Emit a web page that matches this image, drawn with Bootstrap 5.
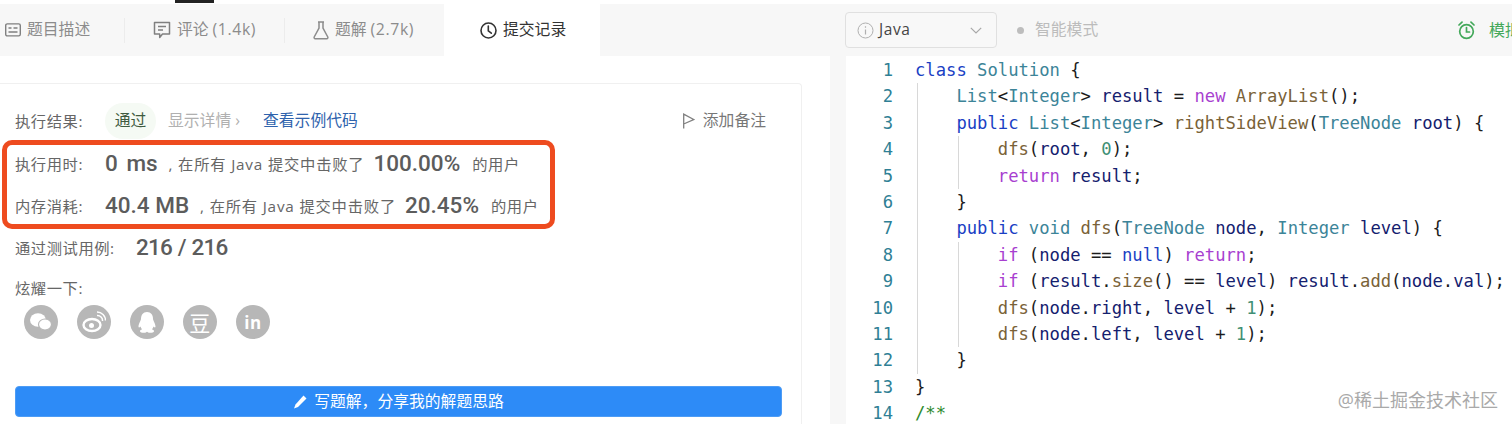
<!DOCTYPE html>
<html lang="zh-CN">
<head>
<meta charset="utf-8">
<title>提交记录</title>
<link rel="stylesheet" href="https://cdn.jsdelivr.net/npm/bootstrap@5.3.0/dist/css/bootstrap.min.css">
<style>
:root{--cjk:"Noto Sans CJK SC";}
html,body{height:424px;overflow:hidden;background:#f7f7f7;}
body{font-family:"Open Sans",var(--cjk),sans-serif;position:relative;}
.top-strip{height:4px;background:#fff;position:relative;padding-left:175px;}
.top-mark{display:block;width:39px;height:3px;background:#222;}
.work{height:420px;}
.left-col{width:846px;flex:none;}
.right-col{flex:1;min-width:0;}
.tab-bar{height:52px;background:#f7f7f7;}
.tab-cell{height:52px;font-size:15.8px;color:#8c8c8c;white-space:nowrap;}
.tab-a{width:125px;padding-left:5px;}
.tab-b{width:160px;padding-left:28px;}
.tab-c{width:159px;padding-left:28px;}
.tab-d{width:156px;padding-left:36px;background:#fff;color:#333;}
.tab-cell svg{margin-right:6px;flex:none;}
.tab-count{letter-spacing:.6px;margin-left:4px;}
.tab-sep{position:relative;}
.tab-sep::after{content:"";position:absolute;right:0;top:14px;height:25px;border-right:1px solid #ececec;}
.pane{width:830px;height:368px;background:#fff;padding-top:27px;}
.res-box{width:802px;height:341px;border-top:1px solid #f0f0f0;border-right:1px solid #f0f0f0;border-top-right-radius:4px;padding-top:19px;color:#666;font-size:15.3px;letter-spacing:.55px;}
.res-line{height:36px;padding-left:15px;white-space:nowrap;}
.lbl{width:90px;flex:none;color:#666;}
.pill{width:51px;height:36px;border-radius:18px;background:#f5faf4;color:#3f5a3f;font-size:15.8px;margin-right:12px;letter-spacing:0;}
.detail{color:#b0b0b0;font-size:15.8px;width:95px;flex:none;letter-spacing:0;}
.sample{color:#2f63ad;font-size:15.8px;text-decoration:none;letter-spacing:0;}
.remark{margin-left:auto;margin-right:35px;color:#777;font-size:15.8px;letter-spacing:0;}
.alert-wrap{width:553px;height:89px;margin:1px 0 0 2px;border:5px solid #ee4b1f;border-radius:10px;}
.stat-line{height:38px;padding-left:8px;white-space:nowrap;}
.stat-line + .stat-line{margin-top:4px;}
.sentence{letter-spacing:.8px;margin-left:11px;}
.big{font-family:"Roboto",sans-serif;font-weight:500;font-size:22.5px;color:#5c5c5c;letter-spacing:0;}
.big-gap{margin-left:9px;}
.big-unit{word-spacing:3px;}
.big-tight{word-spacing:1px;letter-spacing:-.8px;}
.tail{margin-left:12px;}
.test-line{height:38px;padding-left:15px;}
.test-line .lbl{width:121px;}
.share-title{padding-left:15px;margin-top:10px;height:22px;line-height:22px;}
.share-row{padding-left:24px;margin-top:6px;gap:19px;}
.soc{width:34px;height:34px;border-radius:50%;background:#b7b7b7;color:#fff;flex:none;}
.soc-txt{font-family:"Noto Sans CJK SC",sans-serif;font-size:21px;line-height:1;font-weight:400;}
.soc-in{font-family:"Open Sans",sans-serif;font-weight:700;font-size:17px;line-height:1;}
.write-btn{width:767px;height:31px;margin:47px 0 0 15px;background:#2d8bf7;border:1px solid #4d9cf5;border-radius:4px;color:#fff;font-size:15.8px;padding:0;letter-spacing:0;}
.write-btn svg{margin-right:6px;}
.tool-bar{height:52px;background:#f7f7f7;padding-top:8px;}
.lang{width:152px;height:36px;background:#f8f8f8;border:1px solid #e0e0e0;border-radius:4px;padding:0 14px 0 11px;color:#444;font-size:15.5px;letter-spacing:.6px;margin-left:-1px;}
.lang svg:first-child{margin-right:5px;}
.smart{color:#bcbcbc;font-size:15.8px;margin-left:20px;}
.smart-dot{width:7px;height:7px;border-radius:50%;background:#bdbdbd;margin-right:11px;}
.mock{color:#43a85a;font-size:16px;margin-left:auto;white-space:nowrap;width:54px;overflow:hidden;}
.mock svg{margin-right:14px;flex:none;}
.editor{height:368px;background:#fff;overflow:hidden;padding-top:1px;font-family:"DejaVu Sans Mono",monospace;font-size:17.2px;line-height:26.4px;white-space:pre;color:#1c1c1c;}
.nums{width:47px;flex:none;text-align:right;color:#2f7f95;}
.code{margin-left:22px;}
.ind{margin-left:2px;border-left:1px solid #d8d8d8;padding-left:38.4px;}
.k{color:#1a3fc4}.t{color:#3c8498}.v{color:#14206e}.p{color:#a83fd0}.f{color:#7a6238}.n{color:#3f8f74}.c{color:#2e8b2e}
.wm{position:absolute;right:14px;bottom:15px;color:#a9a9a9;font-size:18px;line-height:1;white-space:nowrap;}
</style>
</head>
<body>
<div class="top-strip"><span class="top-mark"></span></div>
<div class="work d-flex">
  <div class="left-col">
    <div class="tab-bar d-flex">
      <div class="tab-cell tab-a tab-sep d-flex align-items-center">
        <svg width="16" height="14" viewBox="0 0 16 14" fill="none" stroke="#808080" stroke-width="1.4"><rect x=".7" y=".9" width="14.6" height="12" rx="1.6"/><path d="M3.5 5h3M8.5 5h4M3.5 9h9"/></svg>题目描述
      </div>
      <div class="tab-cell tab-b tab-sep d-flex align-items-center">
        <svg width="18" height="19" viewBox="0 0 18 19" fill="none" stroke="#808080" stroke-width="1.5"><path d="M1.5 1.5h15v11.5h-7l-2.8 3.4v-3.4h-5.2z" stroke-linejoin="round"/><path d="M5 5.5h8M5 9h5"/></svg>评论<span class="tab-count">(1.4k)</span>
      </div>
      <div class="tab-cell tab-c d-flex align-items-center">
        <svg width="16" height="19" viewBox="0 0 16 19" fill="none" stroke="#8c8c8c" stroke-width="1.5" stroke-linejoin="round"><path d="M5 1h6M6 1v6.2L1.2 16a1.2 1.2 0 0 0 1 1.7h11.6a1.2 1.2 0 0 0 1-1.7L10 7.200V1"/></svg>题解<span class="tab-count">(2.7k)</span>
      </div>
      <div class="tab-cell tab-d d-flex align-items-center">
        <svg width="17" height="17" viewBox="0 0 17 17" fill="none" stroke="#333" stroke-width="1.6"><circle cx="8.500" cy="8.500" r="7.500"/><path d="M8.300 4v4.800l3 2.400" stroke-linecap="round"/></svg>提交记录
      </div>
    </div>
    <div class="d-flex">
      <div class="pane">
        <div class="res-box">
          <div class="res-line d-flex align-items-center">
            <span class="lbl">执行结果:</span>
            <span class="pill d-flex align-items-center justify-content-center">通过</span>
            <span class="detail">显示详情 ›</span>
            <a class="sample" href="#">查看示例代码</a>
            <span class="remark d-flex align-items-center gap-2">
              <svg width="13" height="16" viewBox="0 0 13 16" fill="none" stroke="#808080" stroke-width="1.300"><path d="M1.700 15.500V1.200l10 5.300-10 4.500"/></svg>添加备注
            </span>
          </div>
          <div class="alert-wrap">
            <div class="stat-line d-flex align-items-center">
              <span class="lbl">执行用时:</span><span class="big big-unit">0 ms</span>
              <span class="sentence">, 在所有 Java 提交中击败了</span><span class="big big-gap">100.00%</span><span class="tail">的用户</span>
            </div>
            <div class="stat-line d-flex align-items-center">
              <span class="lbl">内存消耗:</span><span class="big">40.4 MB</span>
              <span class="sentence">, 在所有 Java 提交中击败了</span><span class="big big-gap">20.45%</span><span class="tail">的用户</span>
            </div>
          </div>
          <div class="test-line d-flex align-items-center">
            <span class="lbl">通过测试用例:</span><span class="big big-tight">216 / 216</span>
          </div>
          <div class="share-title">炫耀一下:</div>
          <div class="share-row d-flex">
            <span class="soc d-flex align-items-center justify-content-center">
              <svg width="24" height="20" viewBox="0 0 24 20" fill="#fff"><ellipse cx="9" cy="8" rx="8" ry="6.800"/><ellipse cx="16" cy="12.500" rx="6.500" ry="5.500" stroke="#b7b7b7" stroke-width="1.200"/></svg>
            </span>
            <span class="soc d-flex align-items-center justify-content-center">
              <svg width="24" height="22" viewBox="0 0 24 22" fill="none" stroke="#fff"><ellipse cx="10" cy="14" rx="8.500" ry="6" stroke-width="2.400"/><circle cx="9.500" cy="14.500" r="2.500" fill="#fff" stroke="none"/><path d="M15 4.500a5 5 0 0 1 5.500 5.500M15 1a8.500 8.500 0 0 1 8.500 8.500" stroke-width="1.500"/></svg>
            </span>
            <span class="soc d-flex align-items-center justify-content-center">
              <svg width="20" height="23" viewBox="0 0 20 23" fill="#fff"><path d="M10 1c4 0 6 3 6 7 0 1 2.500 5 2.500 7.500 0 1.500-1 1-2 0-.300 1-.800 2-1.500 2.800 1 .5 2 1 2 2 0 1-2 1.500-4 1.500-1.500 0-2.500-.5-3-1-.5.500-1.500 1-3 1-2 0-4-.5-4-1.500 0-1 1-1.500 2-2-.7-.8-1.200-1.800-1.500-2.800-1 1-2 1.500-2 0C1.500 13 4 9 4 8c0-4 2-7 6-7z"/></svg>
            </span>
            <span class="soc soc-txt d-flex align-items-center justify-content-center">豆</span>
            <span class="soc soc-in d-flex align-items-center justify-content-center">in</span>
          </div>
          <button type="button" class="write-btn btn d-flex align-items-center justify-content-center">
            <svg width="15" height="15" viewBox="0 0 15 15" fill="#fff"><path d="M10.500 1.500l3 3-8.500 8.500-4 1.500 1.500-4z"/></svg>写题解&#xFF0C;分享我的解题思路
          </button>
        </div>
      </div>
    </div>
  </div>
  <div class="right-col">
    <div class="tool-bar d-flex align-items-start">
      <div class="lang d-flex align-items-center">
        <svg width="17" height="17" viewBox="0 0 17 17" fill="none" stroke="#b0b0b0"><circle cx="8.500" cy="8.500" r="7.500"/><path d="M8.500 7.500v5M8.500 4.300v1.500" stroke-width="1.200"/></svg>
        <span>Java</span>
        <svg class="ms-auto" width="12" height="7" viewBox="0 0 12 7" fill="none" stroke="#a8a8a8" stroke-width="1.200"><path d="M.8.800L6 6l5.200-5.200"/></svg>
      </div>
      <div class="smart d-flex align-items-center" style="height:36px"><span class="smart-dot"></span>智能模式</div>
      <div class="mock d-flex align-items-center" style="height:36px">
        <svg width="17" height="19" viewBox="0 0 17 19" fill="none" stroke="#43a85a" stroke-width="1.700"><circle cx="8.500" cy="10.500" r="6.800"/><path d="M8.500 6.500v4.500h3M1 4l3-2.800M16 4l-3-2.800" stroke-linecap="round"/></svg>模拟面试
      </div>
    </div>
    <div class="editor d-flex">
      <div class="nums">1
2
3
4
5
6
7
8
9
10
11
12
13
14</div>
      <div class="code"><div><span class="k">class</span> <span class="t">Solution</span> {</div><div class="ind"><div><span class="t">List</span>&lt;<span class="t">Integer</span>&gt; <span class="v">result</span> = <span class="p">new</span> <span class="f">ArrayList</span>();</div><div><span class="k">public</span> <span class="t">List</span>&lt;<span class="t">Integer</span>&gt; <span class="f">rightSideView</span>(<span class="t">TreeNode</span> <span class="v">root</span>) {</div><div class="ind"><div><span class="f">dfs</span>(<span class="v">root</span>, <span class="n">0</span>);</div><div><span class="p">return</span> <span class="v">result</span>;</div></div><div>}</div><div><span class="k">public</span> <span class="t">void</span> <span class="f">dfs</span>(<span class="t">TreeNode</span> <span class="v">node</span>, <span class="t">Integer</span> <span class="v">level</span>) {</div><div class="ind"><div><span class="p">if</span> (<span class="v">node</span> == <span class="k">null</span>) <span class="p">return</span>;</div><div><span class="p">if</span> (<span class="v">result</span>.<span class="f">size</span>() == <span class="v">level</span>) <span class="v">result</span>.<span class="f">add</span>(<span class="v">node</span>.<span class="v">val</span>);</div><div><span class="f">dfs</span>(<span class="v">node</span>.<span class="v">right</span>, <span class="v">level</span> + <span class="n">1</span>);</div><div><span class="f">dfs</span>(<span class="v">node</span>.<span class="v">left</span>, <span class="v">level</span> + <span class="n">1</span>);</div></div><div>}</div></div><div>}</div><div><span class="c">/**</span></div></div>
    </div>
  </div>
</div>
<div class="wm">@稀土掘金技术社区</div>
</body>
</html>
